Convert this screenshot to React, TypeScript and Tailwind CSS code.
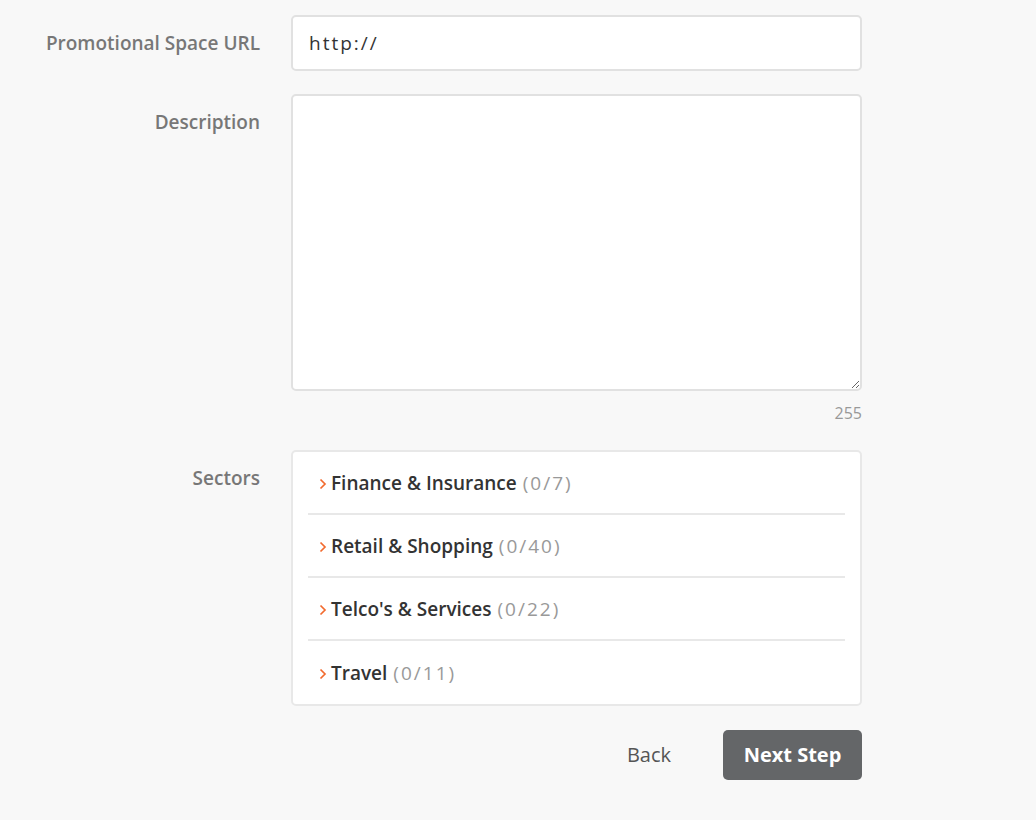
import React from "react";

const sectors = [
  { name: "Finance & Insurance", count: "(0/7)" },
  { name: "Retail & Shopping", count: "(0/40)" },
  { name: "Telco's & Services", count: "(0/22)" },
  { name: "Travel", count: "(0/11)" },
];

export default function App() {
  return (
    <div
      className="min-h-[820px] w-full bg-[#f8f8f8] pt-[15px]"
      style={{ fontFamily: '"Open Sans", "Noto Sans", sans-serif' }}
    >
      {/* URL row */}
      <div className="flex items-center">
        <div className="w-[260px] text-right text-[19px] font-semibold text-[#777]">
          Promotional Space URL
        </div>
        <div className="ml-[31px] w-[571px]">
          <input
            defaultValue="http://"
            className="h-[56px] w-full rounded-[5px] border-2 border-[#e1e1e1] bg-white px-[16px] text-[19px] tracking-[2px] text-[#333] outline-none"
          />
        </div>
      </div>

      {/* Description row */}
      <div className="mt-[23px] flex items-start">
        <div className="w-[260px] pt-[14px] text-right text-[19px] font-semibold text-[#777]">
          Description
        </div>
        <div className="ml-[31px] w-[571px]">
          <textarea className="block h-[297px] w-full resize-y rounded-[5px] border-2 border-[#e1e1e1] bg-white px-[16px] py-[12px] text-[18px] text-[#333] outline-none" />
          <div className="mt-[11px] text-right text-[16px] leading-[22px] text-[#999]">255</div>
        </div>
      </div>

      {/* Sectors row */}
      <div className="mt-[26px] flex items-start">
        <div className="w-[260px] pt-[14px] text-right text-[19px] font-semibold text-[#777]">
          Sectors
        </div>
        <div className="ml-[31px] w-[571px]">
          <div className="rounded-[5px] border-2 border-[#e8e8e8] bg-white px-[15px]">
            {sectors.map((s, i) => (
              <div
                key={s.name}
                className={
                  "flex h-[63px] items-center pt-[2px] " +
                  (i < sectors.length - 1 ? "border-b-2 border-[#e8e8e8]" : "")
                }
              >
                <svg width="12" height="16" viewBox="0 0 12 16" className="ml-[10px] mr-[1px]">
                  <path d="M2.5 3.5 L7 8 L2.5 12.5" fill="none" stroke="#f26a2e" strokeWidth="1.7" />
                </svg>
                <span className="text-[19px] font-semibold text-[#333]">{s.name}</span>
                <span className="ml-[6px] text-[19px] tracking-[2px] text-[#999]">{s.count}</span>
              </div>
            ))}
          </div>
          <div className="mt-[24px] flex items-center justify-end">
            <button className="mr-[52px] text-[20px] text-[#555]">Back</button>
            <button className="h-[50px] w-[139px] rounded-[5px] bg-[#646668] text-[20px] font-bold text-white">
              Next Step
            </button>
          </div>
        </div>
      </div>
    </div>
  );
}
